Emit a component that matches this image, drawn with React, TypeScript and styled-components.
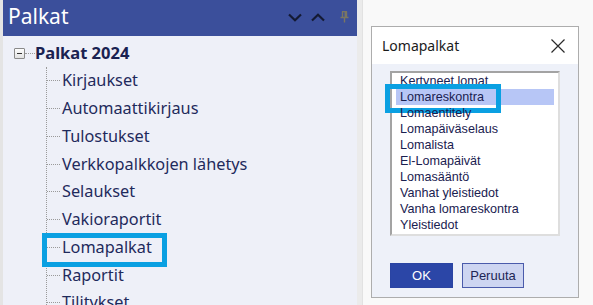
import React from "react";
import styled, { createGlobalStyle } from "styled-components";

const Global = createGlobalStyle`
  html, body { margin: 0; padding: 0; background: #f9f9f9; }
  #root { width: 593px; height: 305px; overflow: hidden; }
`;

const Page = styled.div`
  display: flex;
  width: 593px;
  height: 305px;
  background: #f9f9f9;
  overflow: hidden;
`;

const LeftEdge = styled.div`
  width: 3px;
  flex: none;
  background: #e4e4e4;
`;

const Panel = styled.div`
  width: 354px;
  flex: none;
  display: flex;
  flex-direction: column;
  background: #eef0f8;
`;

const Header = styled.div`
  height: 36px;
  flex: none;
  background: #3b4f9b;
  display: flex;
  align-items: center;
  padding: 0 0 0 5px;
`;

const HeaderTitle = styled.div`
  flex: 1;
  color: #ffffff;
  font-family: "Noto Sans", "Open Sans", sans-serif;
  font-size: 21px;
  line-height: 1;
  margin-top: -3px;
`;

const HeaderIcons = styled.div`
  display: flex;
  align-items: center;
  gap: 9px;
  padding-right: 8px;
  margin-top: -2px;
`;

const Splitter = styled.div`
  width: 5px;
  flex: none;
  background: #ebebeb;
  border-right: 1px solid #e2e2e2;
`;

const Tree = styled.div`
  padding-top: 3px;
  font-family: "Noto Sans", "Open Sans", sans-serif;
  color: #1f2a5c;
`;

const RootRow = styled.div`
  height: 28px;
  display: flex;
  align-items: center;
  padding-left: 11px;
`;

const Expander = styled.div`
  width: 9px;
  height: 9px;
  border: 1px solid #8a8a8a;
  background: linear-gradient(#fdfdfd, #e2e2e2);
  display: flex;
  align-items: center;
  justify-content: center;
  border-radius: 1px;
  &::after {
    content: "";
    width: 5px;
    height: 1px;
    background: #333;
  }
`;

const RootConnector = styled.div`
  width: 10px;
  border-top: 1px dotted #9a9a9a;
`;

const RootLabel = styled.span`
  font-weight: 700;
  font-size: 16.5px;
  color: #1a2251;
  margin-top: -1px;
`;

const Children = styled.div`
  margin-left: 43px;
  border-left: 1px dotted #9a9a9a;
`;

const Row = styled.div`
  position: relative;
  height: 27.75px;
  display: flex;
  align-items: center;
`;

const Connector = styled.div`
  width: 13px;
  border-top: 1px dotted #9a9a9a;
  flex: none;
`;

const Label = styled.span`
  font-size: 16.3px;
  margin-left: 2px;
  margin-top: -1px;
  white-space: nowrap;
`;

const Callout = styled.div<{ $l: number; $t: number; $w: number; $h: number }>`
  position: absolute;
  left: ${(p) => p.$l}px;
  top: ${(p) => p.$t}px;
  width: ${(p) => p.$w}px;
  height: ${(p) => p.$h}px;
  box-sizing: border-box;
  border: 5px solid #0aa0e2;
  pointer-events: none;
`;

const Stage = styled.div`
  flex: 1;
  padding: 26px 0 0 8px;
`;

const Dialog = styled.div`
  width: 208px;
  height: 272px;
  box-sizing: border-box;
  border: 1px solid #adadad;
  display: flex;
  flex-direction: column;
  background: #eef1f9;
`;

const TitleBar = styled.div`
  height: 37px;
  flex: none;
  background: #ffffff;
  display: flex;
  align-items: center;
  justify-content: space-between;
  padding: 0 13px 0 10px;
`;

const Title = styled.span`
  font-family: "Noto Sans", "Open Sans", sans-serif;
  font-size: 14px;
  color: #1b1b1b;
  margin-top: -1px;
`;

const Body = styled.div`
  padding: 7px 18px 0 18px;
  display: flex;
  flex-direction: column;
`;

const ListBox = styled.div`
  height: 165px;
  box-sizing: border-box;
  border-style: solid;
  border-width: 2px;
  border-color: #a3a3a3 #dedede #dedede #a3a3a3;
  background: #ffffff;
  padding: 0 4px 0 4px;
  font-family: "Liberation Sans", Arial, sans-serif;
  font-size: 12.6px;
  color: #1a2150;
`;

const ListItem = styled.div<{ $sel?: boolean }>`
  position: relative;
  height: 16px;
  line-height: 16px;
  padding-left: 4px;
  background: ${(p) => (p.$sel ? "#b7c6f6" : "transparent")};
  white-space: nowrap;
`;

const Buttons = styled.div`
  display: flex;
  gap: 9px;
  margin-top: 27px;
`;

const Button = styled.button<{ $primary?: boolean }>`
  width: ${(p) => (p.$primary ? 63 : 62)}px;
  height: 25px;
  box-sizing: border-box;
  font-family: "Liberation Sans", Arial, sans-serif;
  font-size: 13px;
  padding: 0;
  border: ${(p) => (p.$primary ? "1px solid #2a44a3" : "1.5px solid #4a5bab")};
  background: ${(p) => (p.$primary ? "#2b46a7" : "#cdd5f1")};
  color: ${(p) => (p.$primary ? "#ffffff" : "#1c2555")};
`;

const ChevronDown = () => (
  <svg width="14" height="9" viewBox="0 0 14 9">
    <path d="M1 1.5 L7 7.2 L13 1.5" fill="none" stroke="#141a33" strokeWidth="2.2" />
  </svg>
);

const ChevronUp = () => (
  <svg width="14" height="9" viewBox="0 0 14 9">
    <path d="M1 7.5 L7 1.8 L13 7.5" fill="none" stroke="#141a33" strokeWidth="2.2" />
  </svg>
);

const Pin = () => (
  <svg width="9" height="12" viewBox="0 0 9 12" style={{ marginLeft: 6 }}>
    <path d="M2 0.5 H7 M2.5 0.5 V6 M6.5 0.5 V6 M0.5 6.5 H8.5 M4.5 6.5 V11.5" fill="none" stroke="#7a7662" strokeWidth="1.4" />
    <rect x="4.5" y="1" width="2" height="5" fill="#7a7662" />
  </svg>
);

const CloseX = () => (
  <svg width="14" height="14" viewBox="0 0 14 14">
    <path d="M0.5 0.5 L13.5 13.5 M13.5 0.5 L0.5 13.5" stroke="#2a2a2a" strokeWidth="1.2" />
  </svg>
);

const treeItems = [
  "Kirjaukset",
  "Automaattikirjaus",
  "Tulostukset",
  "Verkkopalkkojen lähetys",
  "Selaukset",
  "Vakioraportit",
  "Lomapalkat",
  "Raportit",
  "Tilitykset",
];

const listItems = [
  "Kertyneet lomat",
  "Lomareskontra",
  "Lomaentitely",
  "Lomapäiväselaus",
  "Lomalista",
  "El-Lomapäivät",
  "Lomasääntö",
  "Vanhat yleistiedot",
  "Vanha lomareskontra",
  "Yleistiedot",
];

export default function App() {
  return (
    <>
      <Global />
      <Page>
        <LeftEdge />
        <Panel>
          <Header>
            <HeaderTitle>Palkat</HeaderTitle>
            <HeaderIcons>
              <ChevronDown />
              <ChevronUp />
              <Pin />
            </HeaderIcons>
          </Header>
          <Tree>
            <RootRow>
              <Expander />
              <RootConnector />
              <RootLabel>Palkat 2024</RootLabel>
            </RootRow>
            <Children>
              {treeItems.map((t) => (
                <Row key={t}>
                  <Connector />
                  <Label>{t}</Label>
                  {t === "Lomapalkat" && <Callout $l={-5} $t={-1} $w={125} $h={34} />}
                </Row>
              ))}
            </Children>
          </Tree>
        </Panel>
        <Splitter />
        <Stage>
          <Dialog>
            <TitleBar>
              <Title>Lomapalkat</Title>
              <CloseX />
            </TitleBar>
            <Body>
              <ListBox>
                {listItems.map((t, i) => (
                  <ListItem key={t} $sel={i === 1}>
                    {t}
                    {i === 1 && <Callout $l={-11} $t={-5} $w={116} $h={29} />}
                  </ListItem>
                ))}
              </ListBox>
              <Buttons>
                <Button $primary>OK</Button>
                <Button>Peruuta</Button>
              </Buttons>
            </Body>
          </Dialog>
        </Stage>
      </Page>
    </>
  );
}
